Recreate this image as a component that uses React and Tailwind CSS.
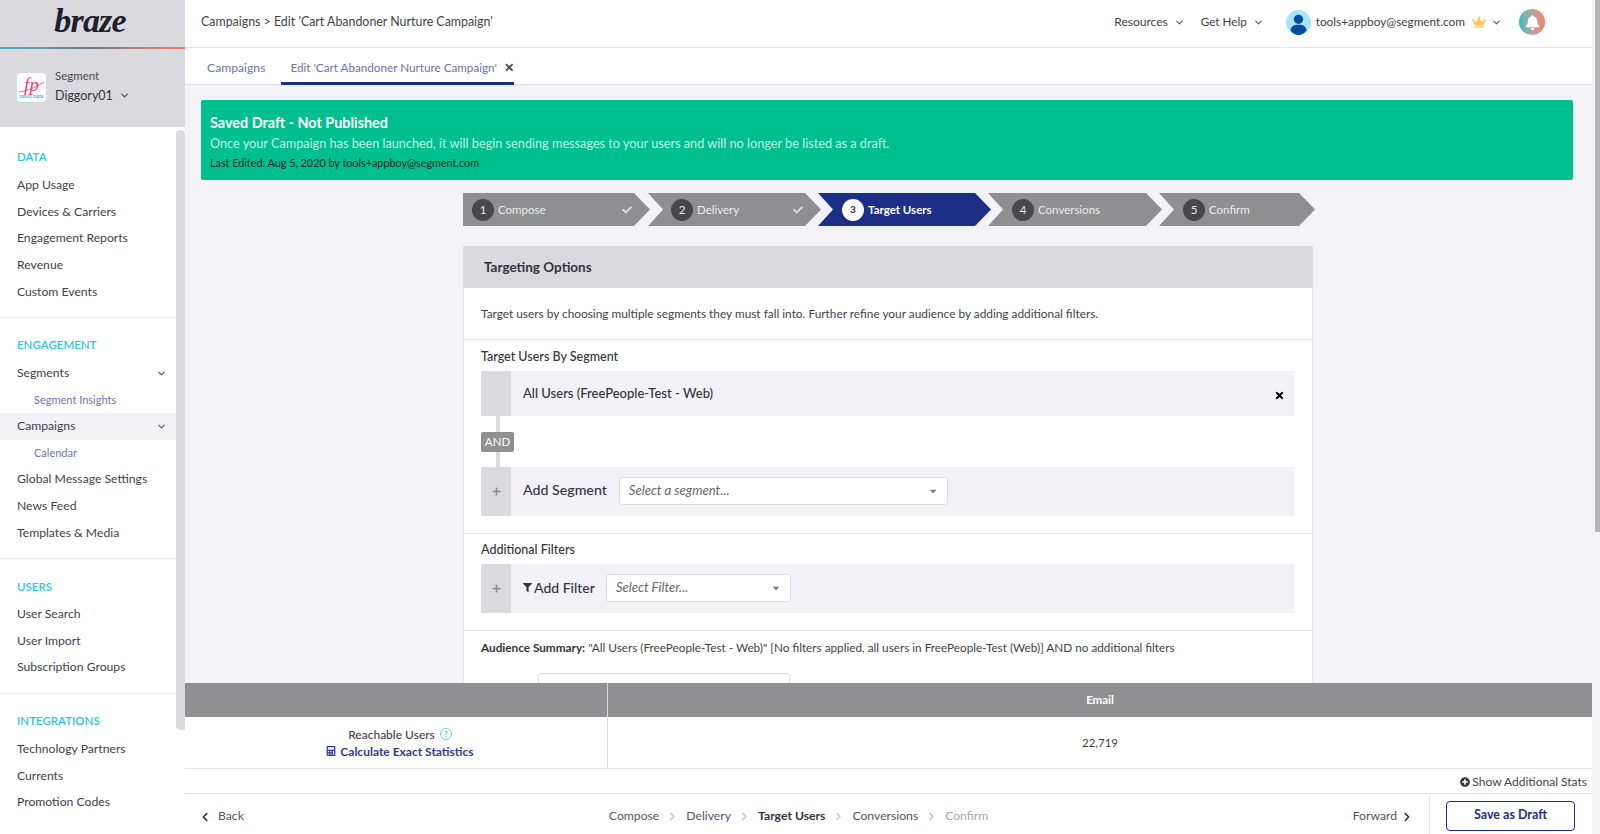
import React from 'react';
import { ChevronDown } from 'lucide-react';
import {
  FaBell, FaCalculator, FaCaretDown, FaCheck, FaChevronLeft, FaChevronRight, FaCrown,
  FaFilter, FaPlus, FaPlusCircle, FaTimes,
} from 'react-icons/fa';

const NAV = [
  { title: 'DATA', items: [{ label: 'App Usage' }, { label: 'Devices & Carriers' }, { label: 'Engagement Reports' }, { label: 'Revenue' }, { label: 'Custom Events' }] },
  {
    title: 'ENGAGEMENT',
    items: [
      { label: 'Segments', caret: true },
      { label: 'Segment Insights', sub: true },
      { label: 'Campaigns', caret: true, active: true },
      { label: 'Calendar', sub: true },
      { label: 'Global Message Settings' },
      { label: 'News Feed' },
      { label: 'Templates & Media' },
    ],
  },
  { title: 'USERS', items: [{ label: 'User Search' }, { label: 'User Import' }, { label: 'Subscription Groups' }] },
  { title: 'INTEGRATIONS', items: [{ label: 'Technology Partners' }, { label: 'Currents' }, { label: 'Promotion Codes' }] },
];

const STEPS = [
  { n: 1, label: 'Compose', done: true, cls: 'w-[187px] pl-[9px] pr-[17px] [clip-path:polygon(0_0,calc(100%-16px)_0,100%_50%,calc(100%-16px)_100%,0_100%)]' },
  { n: 2, label: 'Delivery', done: true, cls: 'w-[173px] pl-[23px] pr-[17px] -ml-[2px] [clip-path:polygon(0_0,calc(100%-16px)_0,100%_50%,calc(100%-16px)_100%,0_100%,15px_50%)]' },
  { n: 3, label: 'Target Users', active: true, cls: 'w-[173px] pl-[24px] pr-[17px] -ml-[3px] [clip-path:polygon(0_0,calc(100%-16px)_0,100%_50%,calc(100%-16px)_100%,0_100%,15px_50%)]' },
  { n: 4, label: 'Conversions', cls: 'w-[174px] pl-[24px] pr-[17px] -ml-[3px] [clip-path:polygon(0_0,calc(100%-16px)_0,100%_50%,calc(100%-16px)_100%,0_100%,15px_50%)]' },
  { n: 5, label: 'Confirm', cls: 'w-[156px] pl-[24px] pr-[17px] -ml-[3px] [clip-path:polygon(0_0,calc(100%-16px)_0,100%_50%,calc(100%-16px)_100%,0_100%,15px_50%)]' },
];

const Sidebar = () => (
  <aside className="w-[185px] shrink-0 h-full flex flex-col bg-white">
    <div className="h-[47px] bg-[#d9d9de] flex justify-center pr-[5px]">
      <span className="text-[34px] leading-[42px] font-bold italic text-[#20202c] tracking-tight font-['Liberation_Serif',serif]">braze</span>
    </div>
    <div className="h-[2px] bg-gradient-to-r from-[#3fb5c4] via-[#6d7a88] to-[#f5795f]" />
    <div className="h-[78px] bg-[#d9d9de] flex items-center pl-[17px] pb-[2px]">
      <div className="relative w-[29px] h-[29px] bg-white rounded-sm flex flex-col items-center justify-center overflow-hidden">
        <span className="text-[19px] leading-[19px] italic text-[#e8427f] font-['Liberation_Serif',serif]">fp</span>
        <span className="text-[4px] leading-[5px] font-bold text-[#2ab7e6] whitespace-nowrap">DEMO DATA</span>
        <svg width="29" height="29" viewBox="0 0 29 29" className="absolute inset-0">
          <path d="M2 19c8-1 17-5 25-10" stroke="#e8427f" strokeWidth="0.8" fill="none" />
        </svg>
      </div>
      <div className="ml-[9px]">
        <div className="text-[11.5px] leading-[15px] text-[#4a4a52]">Segment</div>
        <div className="flex items-center mt-[2px] text-[12.5px] leading-[22px] text-[#33333b]">
          Diggory01
          <ChevronDown size={11} strokeWidth={2.5} className="ml-[6px] text-[#4a4a52]" />
        </div>
      </div>
    </div>
    <div className="flex-1 min-h-0 flex items-start">
      <nav className="w-[176px] pt-[18px]">
        {NAV.map((section, i) => (
          <div key={section.title} className={i === NAV.length - 1 ? '' : 'border-b border-[#ececf0] pb-[12px] mb-[15px]'}>
            <div className="pl-[17px] h-[24px] flex items-center text-[11.5px] font-semibold text-[#2cc6dc]">{section.title}</div>
            <ul className="mt-[3px]">
              {section.items.map((item) => (
                <li
                  key={item.label}
                  className={`h-[26.6px] flex items-center justify-between pr-[9px] ${item.sub ? 'pl-[34px] text-[11px] text-[#7175b5]' : 'pl-[17px] text-[12.2px] text-[#3f3f47]'} ${item.active ? 'bg-[#f2f2f6]' : ''}`}
                >
                  {item.label}
                  {item.caret && <ChevronDown size={11} strokeWidth={2.5} className="text-[#55555d]" />}
                </li>
              ))}
            </ul>
          </div>
        ))}
      </nav>
      <div className="w-[9px] h-[600px] mt-[3px] rounded-t-md rounded-bl-md bg-[#d9d9de]" />
    </div>
  </aside>
);

const TopBar = () => (
  <header className="h-[48px] shrink-0 bg-white border-b border-[#e4e4e9] flex items-center pl-[16px] pb-[3px] text-[12px] text-[#3f3f47]">
    <div className="text-[12.4px]">Campaigns &gt; Edit 'Cart Abandoner Nurture Campaign'</div>
    <div className="ml-auto flex items-center pr-[47px]">
      <span>Resources</span>
      <ChevronDown size={11} strokeWidth={2.5} className="ml-[6px] mr-[16px] text-[#55555d]" />
      <span className="text-[11.7px]">Get Help</span>
      <ChevronDown size={11} strokeWidth={2.5} className="ml-[6px] mr-[22px] text-[#55555d]" />
      <svg width="25" height="25" viewBox="0 0 25 25" className="shrink-0">
        <circle cx="12.5" cy="12.5" r="12.5" fill="#a5e4fb" />
        <circle cx="12.5" cy="9.3" r="4.6" fill="#054a9c" />
        <path d="M4.6 20.5c0-3.8 3-5.8 7.9-5.8s7.9 2 7.9 5.8c-2 2.8-4.8 4.5-7.9 4.5s-5.9-1.7-7.9-4.5z" fill="#054a9c" />
      </svg>
      <span className="ml-[5px] text-[11.8px]">tools+appboy@segment.com</span>
      <FaCrown size={14} className="ml-[7px] text-[#fbc54f]" />
      <ChevronDown size={11} strokeWidth={2.5} className="ml-[5px] mr-[17px] text-[#55555d]" />
      <div className="w-[26px] h-[26px] rounded-full bg-gradient-to-r from-[#12b9c8] to-[#fb7f6d] flex items-center justify-center">
        <FaBell size={15} className="text-white" />
      </div>
    </div>
  </header>
);

const Tabs = () => (
  <div className="h-[37px] shrink-0 bg-white border-b border-[#dedee4] flex items-end pl-[8px] text-[#6e72b0]">
    <div className="h-[36px] pl-[14px] pr-[16px] flex items-center text-[12.2px] pt-[5px]">Campaigns</div>
    <div className="h-[37px] w-[233px] flex items-center pl-[9px] pt-[5px] text-[11.7px] whitespace-nowrap border-b-[3px] border-[#1c2f85] -mb-px">
      Edit 'Cart Abandoner Nurture Campaign'
      <FaTimes size={11} className="ml-[7px] text-[#55555d]" />
    </div>
  </div>
);

const Stepper = () => (
  <div className="w-[850px] ml-[278px] mt-[13px] flex">
    {STEPS.map((s) => (
      <div key={s.n} className={`${s.cls} shrink-0 h-[33px] flex items-center text-[11.5px] ${s.active ? 'bg-[#1c2f85] text-white font-bold' : 'bg-[#8f8f92] text-[#ececee]'}`}>
        <span className={`w-[22px] h-[22px] rounded-full flex items-center justify-center mr-[4px] ${s.active ? 'bg-white text-[#1c2f85] text-[10px] font-bold' : 'bg-[#48484c] text-[#e6e6e8] text-[11.5px]'}`}>{s.n}</span>
        {s.label}
        {s.done && <FaCheck size={10} className="ml-auto mr-[1px] text-[#d9d9dc]" />}
      </div>
    ))}
  </div>
);

const SelectBox = ({ placeholder, className }) => (
  <div className={`${className} h-[28px] mb-[2px] bg-white border border-[#dcdce2] rounded-[3px] flex items-center justify-between pl-[9px] pr-[9px] text-[13.1px] italic text-[#65656d]`}>
    {placeholder}
    <FaCaretDown size={10} className="text-[#7a7a80]" />
  </div>
);

const Targeting = () => (
  <section className="w-[850px] ml-[278px] mt-[20px] bg-white border-x border-[#e3e3e8]">
    <div className="h-[42px] -mx-px bg-[#d9d9de] rounded-t-[2px] flex items-center pl-[21px] text-[13.5px] font-bold text-[#33333b]">Targeting Options</div>
    <div className="h-[52px] border-b border-[#e3e3e8] flex items-center pl-[17px] pt-[1px] text-[11.85px] text-[#3f3f47]">
      Target users by choosing multiple segments they must fall into. Further refine your audience by adding additional filters.
    </div>
    <div className="px-[17px] pt-[7px] pb-[17px] border-b border-[#e3e3e8]">
      <div className="text-[12.5px] leading-[20px] font-medium text-[#33333b] mb-[4px]">Target Users By Segment</div>
      <div className="h-[45px] bg-[#f2f2f6] rounded-[2px] flex items-center">
        <div className="w-[30px] h-full bg-[#d9d9de] rounded-l-[2px]" />
        <span className="ml-[12px] text-[13px] font-medium text-[#33333b]">All Users (FreePeople-Test - Web)</span>
        <FaTimes size={11} className="ml-auto mr-[10px] mt-[3px] text-black" />
      </div>
      <div className="w-[33px] flex flex-col items-center">
        <div className="w-[4px] h-[16px] bg-[#d9d9de]" />
        <div className="w-[33px] h-[20px] rounded-[2px] bg-[#8f8f92] flex items-center justify-center text-[11.5px] text-white">AND</div>
        <div className="w-[4px] h-[15px] bg-[#d9d9de]" />
      </div>
      <div className="h-[49px] bg-[#f2f2f6] rounded-[2px] flex items-center">
        <div className="w-[30px] h-full bg-[#d9d9de] rounded-l-[2px] flex items-center justify-center">
          <FaPlus size={9} className="text-[#8a8a8e]" />
        </div>
        <span className="ml-[12px] mb-[3px] text-[14.2px] font-medium text-[#33333b]">Add Segment</span>
        <SelectBox placeholder="Select a segment..." className="ml-[12px] w-[329px]" />
      </div>
    </div>
    <div className="px-[17px] pt-[6px] pb-[17px] border-b border-[#e3e3e8]">
      <div className="text-[12.5px] leading-[20px] font-medium text-[#33333b] mb-[4px]">Additional Filters</div>
      <div className="h-[49px] bg-[#f2f2f6] rounded-[2px] flex items-center">
        <div className="w-[30px] h-full bg-[#d9d9de] rounded-l-[2px] flex items-center justify-center">
          <FaPlus size={9} className="text-[#8a8a8e]" />
        </div>
        <FaFilter size={9} className="ml-[12px] mb-[3px] text-[#33333b]" />
        <span className="ml-[2px] mb-[3px] text-[14px] font-medium text-[#33333b]">Add Filter</span>
        <SelectBox placeholder="Select Filter..." className="ml-[11px] w-[185px]" />
      </div>
    </div>
    <div className="pl-[17px] pt-[8px] text-[11.75px] leading-[18px] text-[#3f3f47]">
      <span className="font-bold text-[#33333b]">Audience Summary:</span> "All Users (FreePeople-Test - Web)" [No filters applied, all users in FreePeople-Test (Web)] AND no additional filters
    </div>
    <div className="ml-[74px] mt-[16px] w-[252px] h-[30px] border border-[#dcdce2] rounded-t-[3px]" />
  </section>
);

const BottomPanel = () => (
  <div className="h-[151px] shrink-0 bg-white">
    <div className="h-[86px] grid grid-cols-[423px_1fr] grid-rows-[34px_1fr] border-b border-[#e3e3e8]">
      <div className="bg-[#8f8f92] border-r border-[#d9d9de]" />
      <div className="bg-[#8f8f92] flex items-center justify-center text-[11.5px] font-bold text-white">Email</div>
      <div className="border-r border-[#d9d9de] flex flex-col items-center justify-center pl-[8px] text-[12px] leading-[17px]">
        <div className="flex items-center font-medium text-[#3f3f47]">
          Reachable Users
          <span className="ml-[5px] w-[12px] h-[12px] rounded-full border border-[#5fd3df] text-[#2cc6dc] text-[7px] font-bold flex items-center justify-center">?</span>
        </div>
        <div className="flex items-center font-bold text-[#2c3c8c]">
          <FaCalculator size={10} className="mr-[4px]" />
          Calculate Exact Statistics
        </div>
      </div>
      <div className="flex items-center justify-center text-[11.5px] text-[#3f3f47]">22,719</div>
    </div>
    <div className="h-[25px] border-b border-[#e3e3e8] flex items-center justify-end pr-[5px] pt-[1px] text-[12px] text-[#3f3f47]">
      <FaPlusCircle size={10} className="mr-[2px] text-[#33333b]" />
      Show Additional Stats
    </div>
    <div className="h-[40px] flex items-center text-[12.2px] text-[#55555d]">
      <div className="flex-1 h-full flex items-center pl-[15px] pt-[5px]">
        <FaChevronLeft size={10} className="text-[#33333b]" />
        <span className="ml-[8px]">Back</span>
        <div className="ml-[365px] flex items-center">
          <span>Compose</span>
          <FaChevronRight size={9} className="mx-[9px] text-[#c4c4ca]" />
          <span>Delivery</span>
          <FaChevronRight size={9} className="mx-[9px] text-[#c4c4ca]" />
          <span className="font-bold text-[#33333b]">Target Users</span>
          <FaChevronRight size={9} className="mx-[9px] text-[#c4c4ca]" />
          <span>Conversions</span>
          <FaChevronRight size={9} className="mx-[9px] text-[#c4c4ca]" />
          <span className="text-[#a5a5ab]">Confirm</span>
        </div>
        <span className="ml-auto">Forward</span>
        <FaChevronRight size={10} className="ml-[5px] mr-[17px] text-[#33333b]" />
      </div>
      <div className="w-[163px] h-full border-l border-[#e3e3e8] flex items-center justify-start pl-[16px] pt-[3px]">
        <div className="w-[129px] h-[30px] border-[1.5px] border-[#1c2f85] rounded-[4px] flex items-center justify-center text-[12.5px] font-bold text-[#1c2f85]">Save as Draft</div>
      </div>
    </div>
  </div>
);

const App = () => (
  <div className="w-full h-[834px] flex overflow-hidden font-['Lato',sans-serif] bg-white">
    <Sidebar />
    <main className="flex-1 min-w-0 h-full flex flex-col">
      <TopBar />
      <Tabs />
      <div className="flex-1 min-h-0 overflow-hidden bg-[#f2f2f7]">
        <div className="ml-[16px] mr-[19px] mt-[15px] h-[80px] bg-[#00bf8e] rounded-[2px] pl-[9px] pt-[11px]">
          <div className="text-[14.4px] leading-[23px] font-bold text-white">Saved Draft - Not Published</div>
          <div className="text-[12.7px] leading-[19px] text-[#c3f0e2]">Once your Campaign has been launched, it will begin sending messages to your users and will no longer be listed as a draft.</div>
          <div className="text-[10.8px] leading-[20px] text-[#12261f]">Last Edited: Aug 5, 2020 by tools+appboy@segment.com</div>
        </div>
        <Stepper />
        <Targeting />
      </div>
      <BottomPanel />
    </main>
    <div className="w-[8px] shrink-0 h-full bg-[#f4f4f6] flex justify-end">
      <div className="w-[5px] h-[532px] bg-[#b5b5b8]" />
    </div>
  </div>
);

export default App;
